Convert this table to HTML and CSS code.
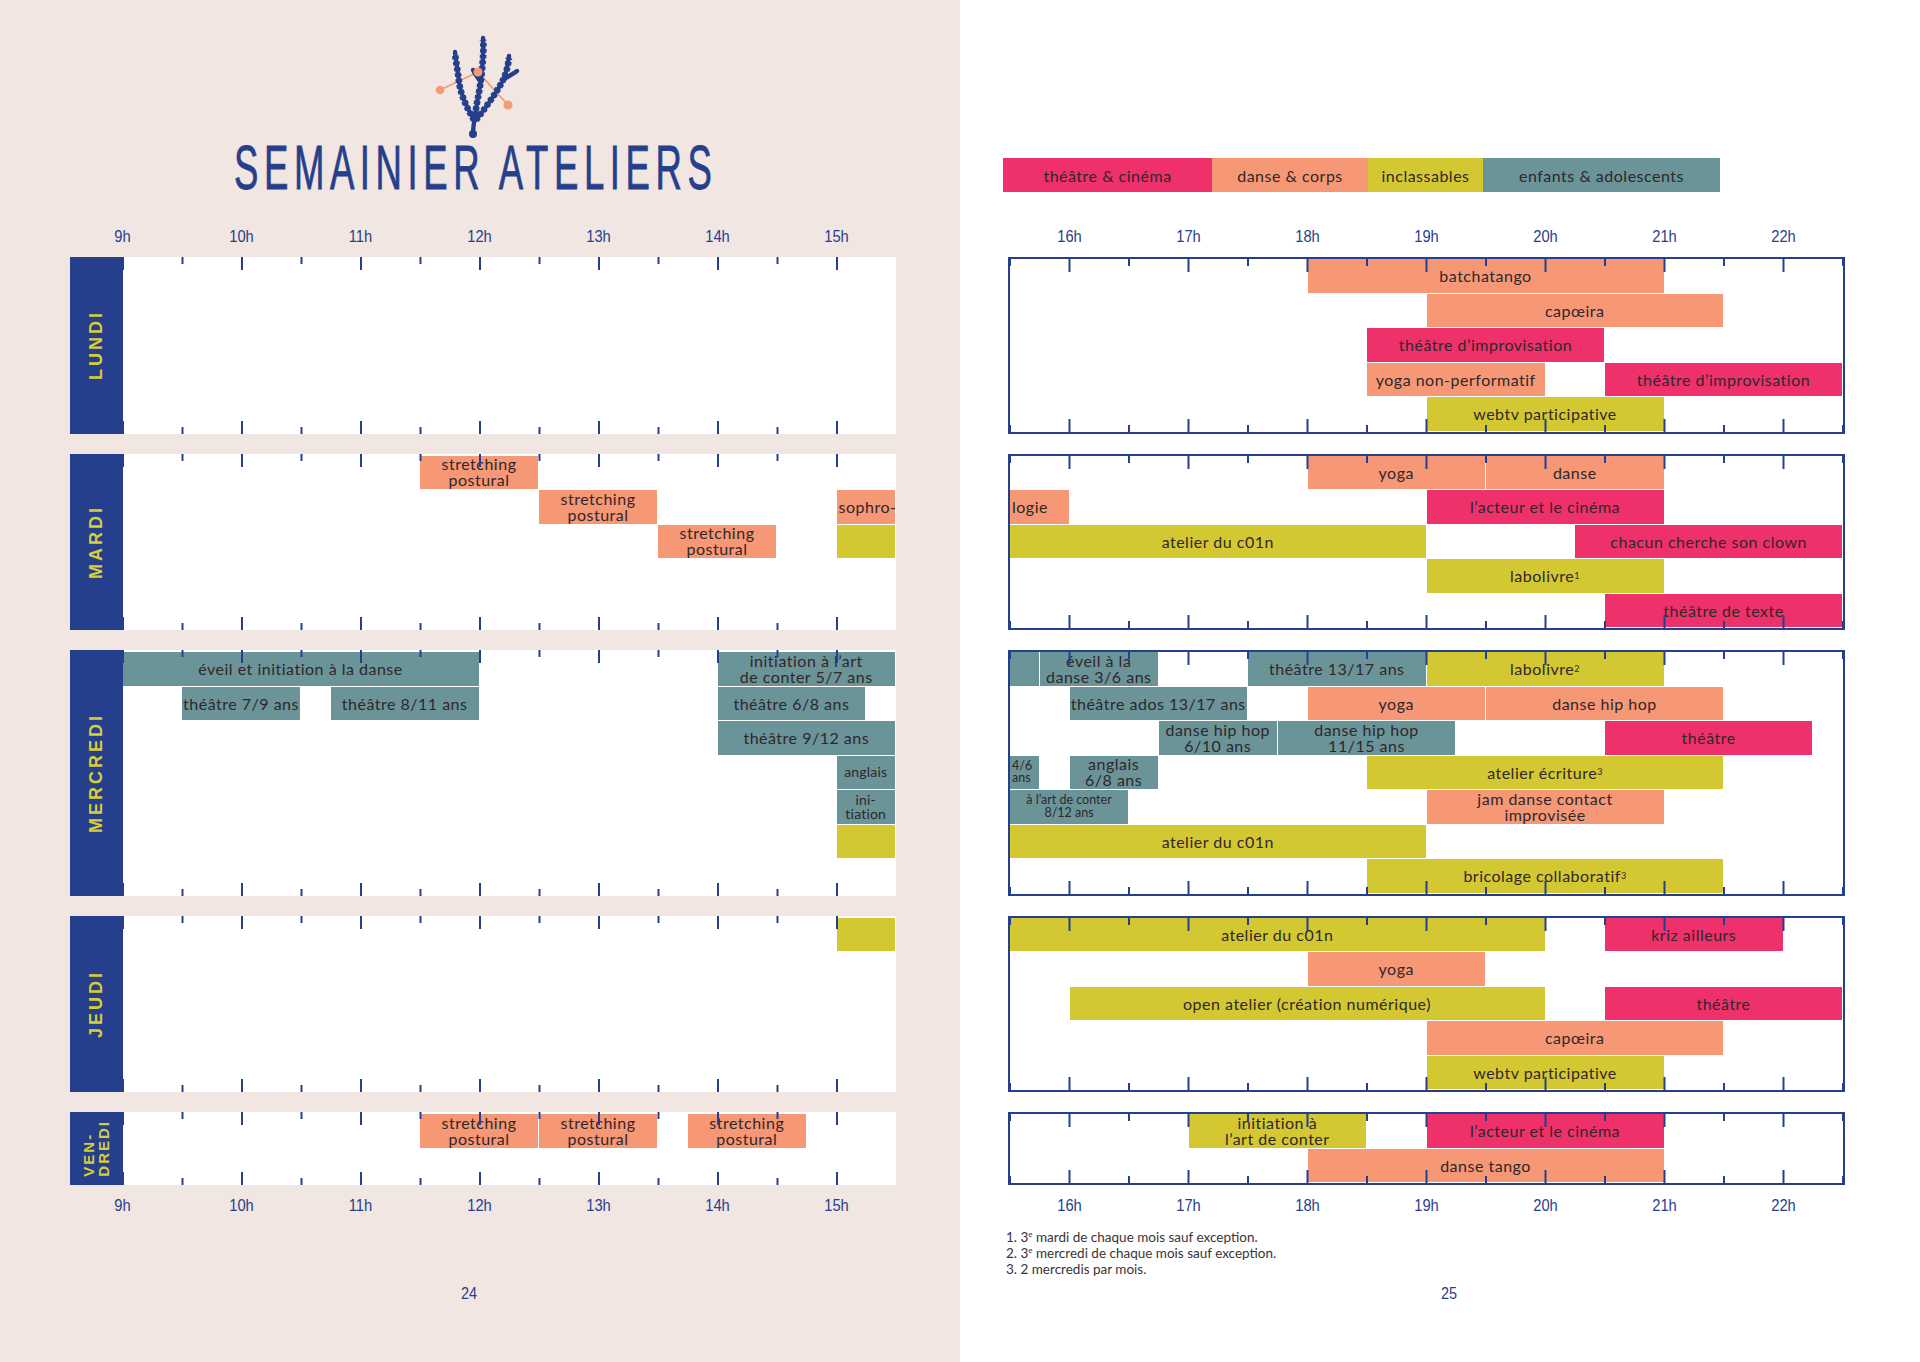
FILE: index.html
```html
<!DOCTYPE html>
<html lang="fr">
<head>
<meta charset="utf-8">
<title>Semainier ateliers</title>
<link rel="stylesheet" href="styles.css">
</head>
<body>
<section class="page left">
  <header class="head">
    <svg class="logo" viewBox="0 0 130 110" width="130" height="110">
      <polyline points="20,60 58,42 88,75" fill="none" stroke="#f49a74" stroke-width="1.7"/>
      <g fill="none" stroke="#263f8c" stroke-linecap="round" stroke-width="4.4">
        <path d="M53,104 C53,98 54,92 55,86"/>
        <path d="M55,86 C57,70 61,55 62,40 C63,28 64,18 63,8"/>
        <path d="M61,52 C58,48 55,45 53,40"/>
        <path d="M54,90 C47,78 41,66 39,52 C38,42 36,32 35,22"/>
        <path d="M56,90 C64,80 74,66 81,54 C86,45 88,36 89,26"/>
        <path d="M84,49 C89,46 93,44 97,41"/>
      </g>
      <g fill="none" stroke="#263f8c" stroke-width="6.6" stroke-dasharray="3.6 2.2">
        <path d="M55,86 C57,70 61,55 62,40 C63,28 64,18 63,10"/>
        <path d="M54,90 C47,78 41,66 39,52 C38,42 36,32 35,24"/>
        <path d="M56,90 C64,80 74,66 81,54 C86,45 88,36 89,28"/>
      </g>
      <circle cx="53" cy="104" r="4" fill="#263f8c"/>
      <g fill="#f49a74">
        <circle cx="20" cy="60" r="4.3"/>
        <circle cx="58" cy="42" r="4.5"/>
        <circle cx="88" cy="75" r="4.5"/>
      </g>
    </svg>
    <h1 class="title"><span>SEMAINIER ATELIERS</span></h1>
  </header>

  <div class="hours hours-left hours-top"><span>9h</span><span>10h</span><span>11h</span><span>12h</span><span>13h</span><span>14h</span><span>15h</span></div>

  <div class="days days-left">
    <div class="day">
      <div class="dlabel"><span>LUNDI</span></div>
      <div class="grid gl r5"></div>
    </div>
    <div class="day">
      <div class="dlabel"><span>MARDI</span></div>
      <div class="grid gl r5">
        <div class="b d two" style="--s:11;--e:15;--r:1">stretching<br>postural</div>
        <div class="b d two" style="--s:15;--e:19;--r:2">stretching<br>postural</div>
        <div class="b d two" style="--s:19;--e:23;--r:3">stretching<br>postural</div>
        <div class="b d la" style="--s:25;--e:27;--r:2">sophro-</div>
        <div class="b i" style="--s:25;--e:27;--r:3"></div>
      </div>
    </div>
    <div class="day">
      <div class="dlabel"><span>MERCREDI</span></div>
      <div class="grid gl r7">
        <div class="b e" style="--s:1;--e:13;--r:1">éveil et initiation à la danse</div>
        <div class="b e two" style="--s:21;--e:27;--r:1">initiation à l’art<br>de conter 5/7 ans</div>
        <div class="b e" style="--s:3;--e:7;--r:2">théâtre 7/9 ans</div>
        <div class="b e" style="--s:8;--e:13;--r:2">théâtre 8/11 ans</div>
        <div class="b e" style="--s:21;--e:26;--r:2">théâtre 6/8 ans</div>
        <div class="b e" style="--s:21;--e:27;--r:3">théâtre 9/12 ans</div>
        <div class="b e sm" style="--s:25;--e:27;--r:4">anglais</div>
        <div class="b e sm" style="--s:25;--e:27;--r:5">ini-<br>tiation</div>
        <div class="b i" style="--s:25;--e:27;--r:6"></div>
      </div>
    </div>
    <div class="day">
      <div class="dlabel"><span>JEUDI</span></div>
      <div class="grid gl r5">
        <div class="b i" style="--s:25;--e:27;--r:1"></div>
      </div>
    </div>
    <div class="day">
      <div class="dlabel dl-small"><span>VEN-<br>DREDI</span></div>
      <div class="grid gl r2">
        <div class="b d two" style="--s:11;--e:15;--r:1">stretching<br>postural</div>
        <div class="b d two" style="--s:15;--e:19;--r:1">stretching<br>postural</div>
        <div class="b d two" style="--s:20;--e:24;--r:1">stretching<br>postural</div>
      </div>
    </div>
  </div>

  <div class="hours hours-left hours-bottom"><span>9h</span><span>10h</span><span>11h</span><span>12h</span><span>13h</span><span>14h</span><span>15h</span></div>

  <div class="pageno pn-left">24</div>
</section>

<section class="page right">
  <div class="legend">
    <span class="t lg1">théâtre &amp; cinéma</span>
    <span class="d lg2">danse &amp; corps</span>
    <span class="i lg3">inclassables</span>
    <span class="e lg4">enfants &amp; adolescents</span>
  </div>

  <div class="hours hours-right hours-top"><span>16h</span><span>17h</span><span>18h</span><span>19h</span><span>20h</span><span>21h</span><span>22h</span></div>

  <div class="days days-right">
    <div class="grid gr r5">
      <div class="b d" style="--s:11;--e:23;--r:1">batchatango</div>
      <div class="b d" style="--s:15;--e:25;--r:2">capœira</div>
      <div class="b t" style="--s:13;--e:21;--r:3">théâtre d’improvisation</div>
      <div class="b d" style="--s:13;--e:19;--r:4">yoga non-performatif</div>
      <div class="b t" style="--s:21;--e:29;--r:4">théâtre d’improvisation</div>
      <div class="b i" style="--s:15;--e:23;--r:5">webtv participative</div>
    </div>
    <div class="grid gr r5">
      <div class="b d" style="--s:11;--e:17;--r:1">yoga</div>
      <div class="b d" style="--s:17;--e:23;--r:1">danse</div>
      <div class="b d la" style="--s:1;--e:3;--r:2">logie</div>
      <div class="b t" style="--s:15;--e:23;--r:2">l’acteur et le cinéma</div>
      <div class="b i" style="--s:1;--e:15;--r:3">atelier du c01n</div>
      <div class="b t" style="--s:20;--e:29;--r:3">chacun cherche son clown</div>
      <div class="b i" style="--s:15;--e:23;--r:4">labolivre<sup>1</sup></div>
      <div class="b t" style="--s:21;--e:29;--r:5">théâtre de texte</div>
    </div>
    <div class="grid gr r7">
      <div class="b e" style="--s:1;--e:2;--r:1"></div>
      <div class="b e two" style="--s:2;--e:6;--r:1">éveil à la<br>danse 3/6 ans</div>
      <div class="b e" style="--s:9;--e:15;--r:1">théâtre 13/17 ans</div>
      <div class="b i" style="--s:15;--e:23;--r:1">labolivre<sup>2</sup></div>
      <div class="b e" style="--s:3;--e:9;--r:2">théâtre ados 13/17 ans</div>
      <div class="b d" style="--s:11;--e:17;--r:2">yoga</div>
      <div class="b d" style="--s:17;--e:25;--r:2">danse hip hop</div>
      <div class="b e two" style="--s:6;--e:10;--r:3">danse hip hop<br>6/10 ans</div>
      <div class="b e two" style="--s:10;--e:16;--r:3">danse hip hop<br>11/15 ans</div>
      <div class="b t" style="--s:21;--e:28;--r:3">théâtre</div>
      <div class="b e xs la" style="--s:1;--e:2;--r:4">4/6<br>ans</div>
      <div class="b e two" style="--s:3;--e:6;--r:4">anglais<br>6/8 ans</div>
      <div class="b i" style="--s:13;--e:25;--r:4">atelier écriture<sup>3</sup></div>
      <div class="b e xs" style="--s:1;--e:5;--r:5">à l’art de conter<br>8/12 ans</div>
      <div class="b d two" style="--s:15;--e:23;--r:5">jam danse contact<br>improvisée</div>
      <div class="b i" style="--s:1;--e:15;--r:6">atelier du c01n</div>
      <div class="b i" style="--s:13;--e:25;--r:7">bricolage collaboratif<sup>3</sup></div>
    </div>
    <div class="grid gr r5">
      <div class="b i" style="--s:1;--e:19;--r:1">atelier du c01n</div>
      <div class="b t" style="--s:21;--e:27;--r:1">kriz ailleurs</div>
      <div class="b d" style="--s:11;--e:17;--r:2">yoga</div>
      <div class="b i" style="--s:3;--e:19;--r:3">open atelier (création numérique)</div>
      <div class="b t" style="--s:21;--e:29;--r:3">théâtre</div>
      <div class="b d" style="--s:15;--e:25;--r:4">capœira</div>
      <div class="b i" style="--s:15;--e:23;--r:5">webtv participative</div>
    </div>
    <div class="grid gr r2">
      <div class="b i two" style="--s:7;--e:13;--r:1">initiation à<br>l’art de conter</div>
      <div class="b t" style="--s:15;--e:23;--r:1">l’acteur et le cinéma</div>
      <div class="b d" style="--s:11;--e:23;--r:2">danse tango</div>
    </div>
  </div>

  <div class="hours hours-right hours-bottom"><span>16h</span><span>17h</span><span>18h</span><span>19h</span><span>20h</span><span>21h</span><span>22h</span></div>

  <ol class="notes">
    <li>1. 3<sup>e</sup> mardi de chaque mois sauf exception.</li>
    <li>2. 3<sup>e</sup> mercredi de chaque mois sauf exception.</li>
    <li>3. 2 mercredis par mois.</li>
  </ol>

  <div class="pageno pn-right">25</div>
</section>
</body>
</html>
```

FILE: styles.css
```css
:root {
  --blue: #263f8c;
  --th: #ee316b;
  --da: #f69876;
  --in: #d4c832;
  --en: #6a9498;
  --ink: #30272a;
}

* { box-sizing: content-box; }

body {
  margin: 0;
  width: 1920px;
  height: 1362px;
  display: flex;
  font-family: Lato, "Open Sans", sans-serif;
  color: var(--ink);
  overflow: hidden;
}

.page {
  width: 960px;
  height: 1362px;
  display: flex;
  flex-direction: column;
  flex: none;
}

.left { background: #f1e6e1; }
.right { background: #ffffff; }

/* header */
.head {
  display: flex;
  flex-direction: column;
  align-items: flex-start;
  padding-top: 30px;
}

.logo {
  display: block;
  margin-left: 420px;
  width: 130px;
  height: 110px;
}

.title {
  margin: -4px 0 0 0;
  width: 942px;
  text-align: center;
  font: 400 63px/63px "Liberation Sans", Arial, sans-serif;
  color: var(--blue);
  -webkit-text-stroke: 0.8px var(--blue);
}

.title span {
  display: inline-block;
  white-space: nowrap;
  letter-spacing: 9.6px;
  margin-right: -9.6px;
  transform: scaleX(0.58);
}

/* hour labels */
.hours {
  display: flex;
  height: 20px;
  font: 400 16px/20px "Liberation Sans", Arial, sans-serif;
  color: var(--blue);
}

.hours span {
  flex: none;
  width: 119px;
  text-align: center;
  transform: scaleX(0.92);
}

.hours-left { margin-left: 63px; }
.hours-right { margin-left: 50px; }
.hours-top { margin-top: 28px; }
.right .hours-top { margin-top: 35px; }
.hours-bottom { margin-top: 11px; }

/* days */
.days {
  display: flex;
  flex-direction: column;
  gap: 20px;
  margin-top: 10px;
}

.days-left { margin-left: 70px; }
.days-right { margin-left: 48px; }

.day { display: flex; }

.dlabel {
  width: 52.5px;
  flex: none;
  background: var(--blue);
  display: flex;
  align-items: center;
  justify-content: center;
}

.dlabel span {
  writing-mode: vertical-rl;
  transform: rotate(180deg);
  color: #d6cd3b;
  font: 700 18px/18px "Liberation Sans", Arial, sans-serif;
  letter-spacing: 3px;
}

.dl-small span {
  font-size: 15px;
  line-height: 15px;
  letter-spacing: 2px;
}

/* grids */
.grid {
  position: relative;
  display: grid;
  background: #fff;
  flex: none;
}

.gl {
  width: 773.5px;
  padding: 2px 0;
  grid-template-columns: repeat(26, 1fr);
}

.gr {
  width: 833px;
  border: 2px solid var(--blue);
  grid-template-columns: repeat(28, 1fr);
}

.r2 { grid-template-rows: repeat(2, 34.5px); }
.r5 { grid-template-rows: repeat(5, 34.5px); }
.r7 { grid-template-rows: repeat(7, 34.5px); }

.grid::after {
  content: "";
  position: absolute;
  top: 0;
  bottom: 0;
  left: 0;
  right: 0;
  z-index: 1;
  pointer-events: none;
  background-image:
    linear-gradient(90deg, var(--blue) 0 2px, transparent 2px),
    linear-gradient(90deg, var(--blue) 0 2px, transparent 2px),
    linear-gradient(90deg, var(--blue) 0 2px, transparent 2px),
    linear-gradient(90deg, var(--blue) 0 2px, transparent 2px);
  background-repeat: repeat-x;
  background-size: 119px 13px, 119px 7px, 119px 13px, 119px 7px;
}

.gl::after {
  right: 2px;
  background-position: -1px 0, 58.5px 0, -1px 100%, 58.5px 100%;
}

.gr::after {
  background-position: 58.5px 0, -1px 0, 58.5px 100%, -1px 100%;
}

/* bars */
.b {
  grid-column: var(--s) / var(--e);
  grid-row: var(--r);
  display: flex;
  align-items: center;
  justify-content: center;
  text-align: center;
  white-space: nowrap;
  font-size: 16px;
  line-height: 17px;
  letter-spacing: 0.5px;
  margin: 0 1px 1px 0;
  min-width: 0;
}

.b sup {
  font-size: 9px;
  line-height: 0;
  vertical-align: 6px;
}

.two { line-height: 16px; }
.sm { font-size: 14px; line-height: 14px; letter-spacing: 0.2px; }
.xs { font-size: 12.5px; line-height: 12.5px; letter-spacing: 0; }
.la { justify-content: flex-start; text-align: left; padding-left: 2px; }

.t { background: var(--th); }
.d { background: var(--da); }
.i { background: var(--in); }
.e { background: var(--en); }

/* legend */
.legend {
  display: flex;
  margin: 158px 0 0 43px;
  height: 34px;
}

.legend span {
  display: flex;
  align-items: center;
  justify-content: center;
  font-size: 16px;
  letter-spacing: 0.5px;
  flex: none;
}

.lg1 { width: 209px; }
.lg2 { width: 156px; }
.lg3 { width: 115px; }
.lg4 { width: 237px; }

/* notes */
.notes {
  list-style: none;
  margin: 13px 0 0 46px;
  padding: 0;
  font-size: 13.5px;
  line-height: 16px;
  color: #3a3434;
}

.notes sup {
  font-size: 8px;
  line-height: 0;
  vertical-align: 5px;
}

/* page numbers */
.pageno {
  width: 40px;
  text-align: center;
  font: 400 17px/20px "Liberation Sans", Arial, sans-serif;
  color: var(--blue);
  transform: scaleX(0.85);
}

.pn-left { margin: 68px 0 0 449px; }
.pn-right { margin: 7px 0 0 469px; }
```
